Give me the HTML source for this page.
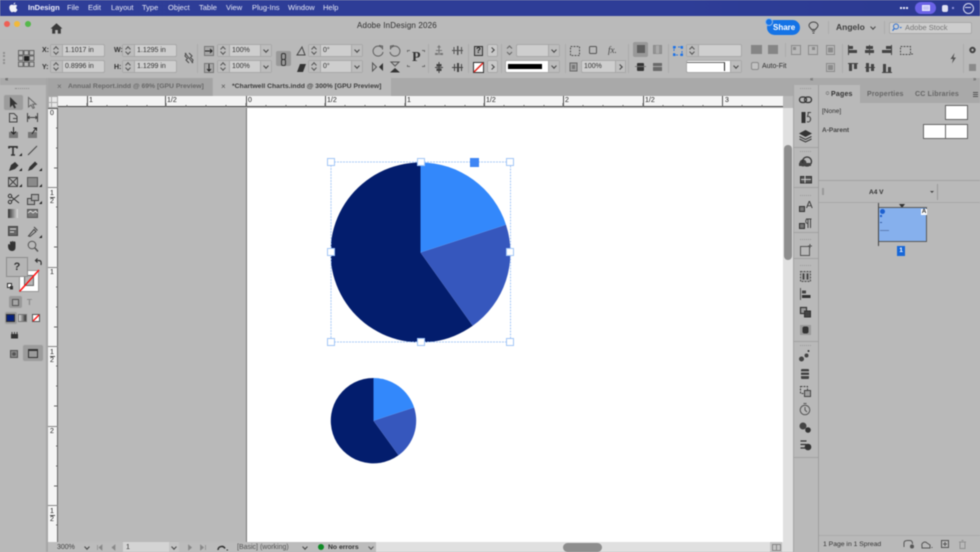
<!DOCTYPE html>
<html><head><meta charset="utf-8"><style>
html,body{margin:0;padding:0}
body{width:980px;height:552px;overflow:hidden;position:relative;background:#b9b9b9;font-family:"Liberation Sans",sans-serif;color:#333}
#w{position:absolute;left:0;top:0;width:980px;height:552px;overflow:hidden;filter:blur(.4px)}
#w div,svg.a{position:absolute}
.t{position:absolute;white-space:nowrap;font-size:7px;line-height:9px;color:#303030}
.m{position:absolute;top:3px;font-size:7.5px;line-height:10px;color:#e8e9f5;white-space:nowrap}
.f{position:absolute;height:13px;box-sizing:border-box;background:#cecece;border:1px solid #a8a8a8;border-radius:2px;font-size:7px;line-height:11px;color:#333;white-space:nowrap}
.sp{position:absolute;left:0;top:0;bottom:0;width:11px;background:#bdbdbd;border-right:1px solid #a8a8a8}
.sp:before,.sp:after{content:"";position:absolute;left:3px;width:3px;height:3px;border:solid #555;border-width:1px 0 0 1px;transform:rotate(45deg)}
.sp:before{top:2px}
.sp:after{top:5px;transform:rotate(225deg)}
.tx{padding-left:14px}
.dd{position:absolute;right:0;top:0;bottom:0;width:10px;background:#bdbdbd;border-left:1px solid #a8a8a8}
.dd:after{content:"";position:absolute;left:3px;top:3px;width:3px;height:3px;border:solid #444;border-width:0 1px 1px 0;transform:rotate(45deg)}
.sep{position:absolute;width:1px;background:#acacac}
.tk{position:absolute;background:#555}
.rt{position:absolute;font-size:7px;line-height:8px;color:#222}
.h{position:absolute;width:8px;height:8px;box-sizing:border-box;background:#fff;border:1px solid #a3c6f6}
.ar{position:absolute;width:3px;height:3px;border:solid #444;border-width:1px 1px 0 0;transform:rotate(45deg)}
.ch{position:absolute;width:3px;height:3px;border:solid #444;border-width:0 1px 1px 0;transform:rotate(45deg)}
</style></head><body><div id="w">

<!-- menu bar -->
<div style="left:0;top:0;width:980px;height:16px;background:linear-gradient(90deg,#2f3e98,#2e3d97 70%,#2c3a90)"></div>
<svg class="a" style="left:9px;top:2px" width="9" height="11" viewBox="0 0 9 11"><path d="M6.200 0.500C5.200 0.700 4.500 1.500 4.600 2.600 5.600 2.600 6.300 1.600 6.200 0.500ZM4.500 3.100C3.900 3.100 3.300 2.600 2.600 2.700 1.300 2.800 0.300 3.900 0.300 5.600 0.300 7.600 1.700 10.200 3 10.200 3.600 10.200 3.900 9.800 4.600 9.800 5.300 9.800 5.600 10.200 6.200 10.200 7.200 10.200 8.100 8.600 8.500 7.600 6.900 6.900 6.800 4.600 8.300 3.800 7.700 3 6.900 2.700 6.200 2.700 5.500 2.700 5 3.100 4.500 3.100Z" fill="#f2f2f8"/></svg>
<span class="m" style="left:28px;font-weight:bold;color:#f0f0fa">InDesign</span>
<span class="m" style="left:67px">File</span>
<span class="m" style="left:88px">Edit</span>
<span class="m" style="left:111px">Layout</span>
<span class="m" style="left:142px">Type</span>
<span class="m" style="left:168px">Object</span>
<span class="m" style="left:199px">Table</span>
<span class="m" style="left:226px">View</span>
<span class="m" style="left:252px">Plug-Ins</span>
<span class="m" style="left:288px">Window</span>
<span class="m" style="left:323px">Help</span>
<div style="left:900px;top:7px;width:2px;height:2px;background:#e8e8f8;box-shadow:3px 0 #e8e8f8,6px 0 #e8e8f8"></div>
<div style="left:915px;top:2px;width:21px;height:12px;border-radius:6px;background:#6a62e6"></div>
<div style="left:922px;top:5px;width:8px;height:6px;border:1px solid #eef;box-sizing:border-box;background:#c7c6f5"></div>
<div style="left:942px;top:5px;width:6px;height:7px;background:#dfe0f2;border-radius:2px"></div>
<div style="left:952px;top:7px;width:2px;height:2px;background:#8f92d8"></div>
<div style="left:963px;top:3px;width:9px;height:9px;border:1px solid #d8daf0;border-radius:50%"></div>
<div style="left:965px;top:7px;width:6px;height:1px;background:#d8daf0"></div>

<!-- title bar -->
<div style="left:0;top:16px;width:980px;height:23px;background:#bababa;border-bottom:1px solid #aaa"></div>
<div style="left:4px;top:21px;width:6px;height:6px;border-radius:50%;background:#ee5f55"></div>
<div style="left:14px;top:21px;width:6px;height:6px;border-radius:50%;background:#f2b93a"></div>
<div style="left:25px;top:21px;width:6px;height:6px;border-radius:50%;background:#54b84a"></div>
<svg class="a" style="left:50px;top:23px" width="13" height="11" viewBox="0 0 13 11"><path d="M6.500 0.300L0.600 5.600H2.200V10.600H5.200V7H7.800V10.600H10.800V5.600H12.400Z" fill="#3a3a3a"/></svg>
<div class="t" style="left:357px;top:21px;font-size:8px;letter-spacing:.15px;line-height:10px">Adobe InDesign 2026</div>

<div style="left:767px;top:20px;width:33px;height:15px;border-radius:8px;background:#1473e6"></div>
<div style="left:765px;top:18px;width:6px;height:6px;border-radius:50%;background:#1473e6;border:0.5px solid #8fb5e6"></div>
<div class="t" style="left:773px;top:23px;font-size:8px;color:#fff;font-weight:bold;line-height:10px">Share</div>
<svg class="a" style="left:808px;top:21px" width="11" height="13" viewBox="0 0 11 13"><path d="M3.500 8.500C3 7 1 6.500 1 4.500 1 2.500 3 1 5.500 1S10 2.500 10 4.500C10 6.500 8 7 7.500 8.500Z" fill="none" stroke="#444" stroke-width="1"/><path d="M4 10H7M4.500 12H6.500" stroke="#444" stroke-width="1"/></svg>
<div class="sep" style="left:828px;top:21px;height:13px"></div>
<div class="t" style="left:836px;top:22px;font-size:8.500px;line-height:11px;font-weight:bold;color:#404040">Angelo</div>
<div class="ch" style="left:871px;top:25px"></div>
<div class="sep" style="left:884px;top:21px;height:13px"></div>
<div style="left:889px;top:22px;width:83px;height:12px;box-sizing:border-box;background:#cdcdcd;border:1px solid #aaa;border-radius:2px"></div>
<svg class="a" style="left:892px;top:23px" width="10" height="9" viewBox="0 0 10 9"><circle cx="4" cy="3.500" r="2.500" fill="none" stroke="#2f6fd0" stroke-width="1"/><path d="M2.300 5.500L0.500 7.800" stroke="#2f6fd0" stroke-width="1.200"/><path d="M7.500 4H10L8.700 5.500Z" fill="#2f6fd0"/></svg>
<div class="t" style="left:905px;top:23px;color:#777;font-size:7.500px">Adobe Stock</div>

<!-- control panel -->
<div style="left:0;top:39px;width:980px;height:39px;background:#b9b9b9"></div>
<div style="left:3px;top:52px;width:1px;height:12px;border-left:2px dotted #909090"></div>

<div class="t" style="left:42px;top:46px;font-weight:bold">X:</div>
<div class="t" style="left:42px;top:63px;font-weight:bold">Y:</div>
<div class="f tx" style="left:50px;top:44px;width:55px"><span class="sp"></span>1.1017 in</div>
<div class="f tx" style="left:50px;top:60px;width:55px"><span class="sp"></span>0.8996 in</div>
<div class="t" style="left:114px;top:46px;font-weight:bold">W:</div>
<div class="t" style="left:114px;top:63px;font-weight:bold">H:</div>
<div class="f tx" style="left:122px;top:44px;width:55px"><span class="sp"></span>1.1295 in</div>
<div class="f tx" style="left:122px;top:60px;width:55px"><span class="sp"></span>1.1299 in</div>
<div class="sep" style="left:197px;top:44px;height:29px"></div>
<div class="f tx" style="left:217px;top:44px;width:55px"><span class="sp"></span>100%<span class="dd"></span></div>
<div class="f tx" style="left:217px;top:60px;width:55px"><span class="sp"></span>100%<span class="dd"></span></div>
<div style="left:276px;top:51px;width:15px;height:15px;background:#999;border-radius:2px"></div>
<div style="left:281px;top:53px;width:3px;height:5px;border:1px solid #333;border-radius:2px"></div>
<div style="left:281px;top:59px;width:3px;height:5px;border:1px solid #333;border-radius:2px"></div>
<div class="f tx" style="left:308px;top:44px;width:55px"><span class="sp"></span>0°<span class="dd"></span></div>
<div class="f tx" style="left:308px;top:60px;width:55px"><span class="sp"></span>0°<span class="dd"></span></div>
<div class="t" style="left:412px;top:50px;font:bold 14px/16px 'Liberation Serif',serif;color:#333">P</div>
<div class="sep" style="left:428px;top:44px;height:29px"></div>
<div class="sep" style="left:468px;top:44px;height:29px"></div>
<div style="left:474px;top:46px;width:9px;height:10px;box-sizing:border-box;border:1px solid #333;background:#aaa;font:bold 8px/8px 'Liberation Sans';text-align:center;color:#222">?</div>
<div style="left:487px;top:44px;width:11px;height:13px;box-sizing:border-box;background:#c9c9c9;border:1px solid #a8a8a8;border-radius:2px"></div>
<div class="ar" style="left:490px;top:48px"></div>
<div style="left:487px;top:60px;width:11px;height:13px;box-sizing:border-box;background:#c9c9c9;border:1px solid #a8a8a8;border-radius:2px"></div>
<div class="ar" style="left:490px;top:65px"></div>
<div class="sep" style="left:501px;top:44px;height:29px"></div>
<div class="f" style="left:516px;top:44px;width:44px"><span class="dd"></span></div>
<div class="f" style="left:505px;top:60px;width:55px;background:#fff"><span class="dd"></span></div>
<div style="left:508px;top:64px;width:34px;height:5px;background:#000"></div>
<div class="sep" style="left:565px;top:44px;height:29px"></div>
<div class="t" style="left:608px;top:45px;font:italic 9px/11px 'Liberation Serif',serif;color:#444">fx.</div>
<div class="f" style="left:581px;top:60px;width:45px;padding-left:2px">100%</div>
<div style="left:615px;top:60px;width:11px;height:13px;box-sizing:border-box;background:#c0c0c0;border:1px solid #a8a8a8"></div>
<div class="ar" style="left:618px;top:65px"></div>
<div class="sep" style="left:628px;top:44px;height:29px"></div>
<div style="left:633px;top:42px;width:15px;height:15px;background:#999;border-radius:2px"></div>
<div class="sep" style="left:668px;top:44px;height:29px"></div>
<div class="f" style="left:686px;top:44px;width:56px;background:#cfcfcf"><span class="sp"></span></div>
<div class="f" style="left:686px;top:60px;width:56px;background:#fff"><span class="dd"></span></div>
<div style="left:687px;top:62px;width:38px;height:9px;border-top:1px solid #666;border-right:1px solid #222;box-sizing:border-box"></div>
<div style="left:751px;top:62px;width:8px;height:8px;box-sizing:border-box;border:1px solid #8a8a8a;border-radius:2px;background:#c2c2c2"></div>
<div class="t" style="left:762px;top:62px">Auto-Fit</div>
<div class="sep" style="left:785px;top:43px;height:14px"></div>
<div class="sep" style="left:842px;top:44px;height:29px"></div>
<div class="sep" style="left:963px;top:44px;height:29px"></div>

<!-- left strip / collapse row -->
<div style="left:0;top:78px;width:46px;height:7px;background:#a9a9a9"></div>
<div class="t" style="left:5px;top:76px;font-size:6px;font-weight:bold;color:#555">«</div>
<div style="left:46px;top:78px;width:2px;height:474px;background:#a6a6a6"></div>
<div style="left:794px;top:78px;width:186px;height:7px;background:#a9a9a9"></div>
<div class="t" style="left:810px;top:76px;font-size:6px;font-weight:bold;color:#666">«</div>
<div class="t" style="left:973px;top:76px;font-size:6px;font-weight:bold;color:#666">»</div>

<!-- tabs -->
<div style="left:48px;top:78px;width:746px;height:18px;background:#a9a9a9"></div>
<div style="left:48px;top:78px;width:164px;height:18px;background:#a3a3a3"></div>
<div class="t" style="left:57px;top:82px;font-size:8px;line-height:10px;color:#666">×</div>
<div class="t" style="left:68px;top:82px;color:#686868;font-weight:bold;font-size:6.800px;line-height:9px">Annual Report.indd @ 69% [GPU Preview]</div>
<div style="left:213px;top:78px;width:178px;height:18px;background:#b9b9b9"></div>
<div class="t" style="left:221px;top:82px;font-size:8px;line-height:10px;color:#555">×</div>
<div class="t" style="left:232px;top:82px;color:#3d3d3d;font-weight:bold;font-size:6.800px;line-height:9px">*Chartwell Charts.indd @ 300% [GPU Preview]</div>

<!-- rulers -->
<div style="left:48px;top:96px;width:735px;height:11px;background:#f4f4f4;border-bottom:1px solid #444;box-sizing:border-box"></div>
<div style="left:48px;top:96px;width:10px;height:12px;background:#e8e8e8;border:1px solid #aaa;box-sizing:border-box"></div>
<div style="left:51px;top:96px;width:1px;height:12px;background:#aaa"></div>
<div style="left:48px;top:102px;width:10px;height:1px;background:#aaa"></div>
<div class="tk" style="left:87px;top:96px;width:1px;height:11px"></div><div class="rt" style="left:89px;top:97px">1</div>
<div class="tk" style="left:165px;top:96px;width:1px;height:11px"></div><div class="rt" style="left:167px;top:97px">1/2</div>
<div class="tk" style="left:246px;top:96px;width:1px;height:11px"></div><div class="rt" style="left:248px;top:97px">0</div>
<div class="tk" style="left:325px;top:96px;width:1px;height:11px"></div><div class="rt" style="left:327px;top:97px">1/2</div>
<div class="tk" style="left:405px;top:96px;width:1px;height:11px"></div><div class="rt" style="left:407px;top:97px">1</div>
<div class="tk" style="left:484px;top:96px;width:1px;height:11px"></div><div class="rt" style="left:486px;top:97px">1/2</div>
<div class="tk" style="left:563px;top:96px;width:1px;height:11px"></div><div class="rt" style="left:565px;top:97px">2</div>
<div class="tk" style="left:643px;top:96px;width:1px;height:11px"></div><div class="rt" style="left:645px;top:97px">1/2</div>
<div class="tk" style="left:722px;top:96px;width:1px;height:11px"></div><div class="rt" style="left:725px;top:97px">3</div>
<svg class="a" style="left:58px;top:103px" width="725" height="4"><path d="M9 2V4M49 2V4M69 2V4M89 2V4M128 2V4M148 2V4M168 2V4M208 2V4M228 2V4M248 2V4M287 2V4M307 2V4M327 2V4M367 2V4M387 2V4M407 2V4M446 2V4M466 2V4M486 2V4M525 2V4M545 2V4M565 2V4M605 2V4M625 2V4M645 2V4M684 2V4M704 2V4M29 0V4M108 0V4M188 0V4M267 0V4M347 0V4M426 0V4M505 0V4M585 0V4" stroke="#666" stroke-width="1" fill="none"/></svg>

<div style="left:48px;top:108px;width:10px;height:434px;background:#f4f4f4"></div>
<div style="left:57px;top:108px;width:1px;height:434px;background:#666"></div>
<div class="tk" style="left:48px;top:108px;width:10px;height:1px"></div><div class="rt" style="left:50px;top:110px">0</div>
<div class="tk" style="left:48px;top:187px;width:10px;height:1px;background:#888"></div><div class="rt" style="left:50px;top:190px">1</div><div class="tk" style="left:50px;top:197px;width:5px;height:1px"></div><div class="rt" style="left:50px;top:198px">2</div>
<div class="tk" style="left:48px;top:267px;width:10px;height:1px;background:#888"></div><div class="rt" style="left:50px;top:269px">1</div>
<div class="tk" style="left:48px;top:346px;width:10px;height:1px;background:#888"></div><div class="rt" style="left:50px;top:349px">1</div><div class="tk" style="left:50px;top:356px;width:5px;height:1px"></div><div class="rt" style="left:50px;top:357px">2</div>
<div class="tk" style="left:48px;top:426px;width:10px;height:1px;background:#888"></div><div class="rt" style="left:50px;top:428px">2</div>
<div class="tk" style="left:48px;top:505px;width:10px;height:1px;background:#888"></div><div class="rt" style="left:50px;top:508px">1</div><div class="tk" style="left:50px;top:515px;width:5px;height:1px"></div><div class="rt" style="left:50px;top:516px">2</div>
<svg class="a" style="left:53px;top:108px" width="5" height="434"><path d="M3 20H5M3 40H5M1 60H5M3 99H5M3 119H5M1 139H5M3 179H5M3 199H5M1 219H5M3 258H5M3 278H5M1 298H5M3 338H5M3 358H5M1 378H5M3 417H5" stroke="#666" fill="none"/></svg>

<!-- page -->
<div style="left:246px;top:108px;width:537px;height:434px;background:#fff;border-left:1px solid #777;box-sizing:border-box"></div>

<!-- pies -->
<svg class="a" style="left:0;top:0" width="980" height="552">
<path d="M420.500 252.500V162.500A90 90 0 1 0 472.700 325.800Z" fill="#031d6d"/>
<path d="M420.500 252.500L472.700 325.800A90 90 0 0 0 506 224.700Z" fill="#3657bd"/>
<path d="M420.500 252.500V162.500A90 90 0 0 1 506 224.700Z" fill="#3388fb"/>
<path d="M373.500 420.700V378A42.700 42.700 0 1 0 398.500 455.300Z" fill="#031d6d"/>
<path d="M373.500 420.700L398.500 455.300A42.700 42.700 0 0 0 414.100 407.500Z" fill="#3657bd"/>
<path d="M373.500 420.700V378A42.700 42.700 0 0 1 414.100 407.500Z" fill="#3388fb"/>
<rect x="331" y="162" width="179.500" height="180" fill="none" stroke="#a9caf8" stroke-width="1" stroke-dasharray="2 1"/>
</svg>
<div class="h" style="left:327px;top:158px"></div>
<div class="h" style="left:417px;top:158px"></div>
<div class="h" style="left:506px;top:158px"></div>
<div class="h" style="left:327px;top:248px"></div>
<div class="h" style="left:506px;top:248px"></div>
<div class="h" style="left:327px;top:338px"></div>
<div class="h" style="left:417px;top:338px"></div>
<div class="h" style="left:506px;top:338px"></div>
<div style="left:470px;top:158px;width:9px;height:9px;background:#3f86f4"></div>

<!-- v scrollbar -->
<div style="left:783px;top:108px;width:11px;height:444px;background:#e0e0e0"></div>
<div style="left:784px;top:145px;width:8px;height:115px;border-radius:4px;background:#8e8e8e"></div>

<!-- status bar -->
<div style="left:48px;top:542px;width:746px;height:10px;background:#e0e0e0"></div>
<div style="left:48px;top:542px;width:328px;height:10px;background:#bcbcbc"></div>
<div class="t" style="left:57px;top:543px;color:#444;line-height:10px">300%</div>
<div class="ch" style="left:85px;top:545px"></div>
<div style="left:123px;top:542px;width:46px;height:10px;background:#d4d4d4;font-size:7px;line-height:11px;padding-left:3px;box-sizing:border-box;color:#333">1</div>
<div style="left:169px;top:542px;width:10px;height:10px;background:#c4c4c4"></div>
<div class="ch" style="left:172px;top:545px"></div>
<div class="t" style="left:237px;top:543px;color:#555;font-size:7px;line-height:10px">[Basic] (working)</div>
<div class="ch" style="left:303px;top:545px"></div>
<div style="left:318px;top:544px;width:6px;height:6px;border-radius:50%;background:#0f8a25"></div>
<div class="t" style="left:328px;top:543px;color:#333;font-weight:bold;font-size:6.800px;line-height:10px">No errors</div>
<div class="ch" style="left:369px;top:545px;border-color:#555"></div>
<div style="left:563px;top:543px;width:39px;height:9px;border-radius:5px;background:#8e8e8e"></div>
<div style="left:770px;top:542px;width:12px;height:10px;background:#c4c4c4"></div>
<div style="left:772px;top:544px;width:9px;height:7px;border:1px solid #888;box-sizing:border-box"></div>
<div style="left:776px;top:544px;width:1px;height:7px;background:#888"></div>

<!-- toolbar buttons & swatches -->
<div style="left:15px;top:88px;width:14px;border-top:1px dotted #8a8a8a"></div>
<div style="left:4px;top:95px;width:19px;height:15px;background:#9c9c9c;border-radius:2px"></div>
<div style="left:19px;top:270px;width:20px;height:22px;background:#fff;border:1px solid #999;box-sizing:border-box"></div>
<div style="left:24px;top:275px;width:10px;height:11px;background:#b5b5b5;border:1px solid #666;box-sizing:border-box"></div>
<div style="left:6px;top:257px;width:22px;height:20px;box-sizing:border-box;background:#b5b5b5;border:1px solid #8d8d8d;font:bold 11px/19px 'Liberation Sans';text-align:center;color:#333">?</div>
<div style="left:9px;top:296px;width:13px;height:12px;background:#999;border-radius:2px"></div>
<div style="left:12px;top:299px;width:7px;height:7px;box-sizing:border-box;border:1px solid #555;background:#a8a8a8"></div>
<div class="t" style="left:27px;top:297px;font:bold 8px/11px 'Liberation Sans';color:#8a8a8a">T</div>
<div style="left:5px;top:312px;width:12px;height:12px;background:#9c9c9c;border-radius:2px"></div>
<div style="left:6px;top:314px;width:9px;height:8px;background:#06207a;border:1px solid #333;box-sizing:border-box"></div>
<div style="left:18px;top:314px;width:9px;height:8px;background:linear-gradient(90deg,#ddd,#333);border:1px solid #777;box-sizing:border-box"></div>
<div style="left:23px;top:345px;width:20px;height:16px;background:#9c9c9c;border-radius:2px"></div>
<div style="left:28px;top:349px;width:10px;height:9px;border:1px solid #333;border-top:2px solid #333;box-sizing:border-box"></div>

<!-- right dock -->
<div style="left:793px;top:85px;width:1px;height:467px;background:#a5a5a5"></div>
<div style="left:794px;top:85px;width:25px;height:467px;background:#b9b9b9;border-right:1px solid #9d9d9d;box-sizing:border-box"></div>

<!-- right panel -->
<div style="left:819px;top:85px;width:161px;height:467px;background:#b9b9b9"></div>
<div style="left:819px;top:85px;width:161px;height:18px;background:#a9a9a9"></div>
<div style="left:819px;top:85px;width:41px;height:18px;background:#b9b9b9"></div>
<div class="t" style="left:825px;top:90px;font-size:6px;color:#666">≎</div>
<div class="t" style="left:831px;top:90px;font-weight:bold;font-size:7px;letter-spacing:.2px;color:#333">Pages</div>
<div class="t" style="left:867px;top:90px;font-weight:bold;font-size:7px;letter-spacing:.2px;color:#666">Properties</div>
<div class="t" style="left:915px;top:90px;font-weight:bold;font-size:7px;letter-spacing:.2px;color:#666">CC Libraries</div>
<div style="left:973px;top:92px;width:5px;height:1px;background:#555;box-shadow:0 2px #555,0 4px #555"></div>
<div class="t" style="left:822px;top:107px;font-size:6.500px">[None]</div>
<div class="t" style="left:822px;top:126px;font-size:6.500px;font-weight:bold;color:#444">A-Parent</div>
<div style="left:945px;top:105px;width:23px;height:15px;background:#fff;border:1px solid #666;box-sizing:border-box"></div>
<div style="left:923px;top:124px;width:45px;height:15px;background:#fff;border:1px solid #666;box-sizing:border-box"></div>
<div style="left:945px;top:124px;width:1px;height:15px;background:#666"></div>
<div style="left:819px;top:180px;width:161px;height:1px;background:#a3a3a3"></div>
<div style="left:822px;top:188px;width:2px;height:7px;background:#999"></div>
<div class="t" style="left:869px;top:188px;font-weight:bold;font-size:6.500px">A4 V</div>
<div style="left:930px;top:191px;width:0;height:0;border:2px solid transparent;border-top:2px solid #444"></div>
<div style="left:937px;top:184px;width:1px;height:16px;background:#9a9a9a"></div>
<div style="left:819px;top:202px;width:161px;height:1px;background:#a8a8a8"></div>
<div style="left:899px;top:204px;width:0;height:0;border:3px solid transparent;border-top:4px solid #333"></div>
<div style="left:878px;top:203px;width:1px;height:43px;background:#444"></div>
<div style="left:879px;top:207px;width:48px;height:35px;background:#86b0ed;border:solid #5a5a5a;border-width:1px 1px 1px 0;box-sizing:border-box"></div>
<div style="left:880px;top:209px;width:5px;height:5px;border-radius:50%;background:#1c5fcf"></div>
<div style="left:880px;top:215px;width:2px;height:2px;background:#1c5fcf"></div>
<div style="left:880px;top:222px;width:2px;height:1px;background:#3a63a8"></div>
<div style="left:880px;top:230px;width:9px;height:1px;background:#5f7fb5"></div>
<div style="left:921px;top:209px;width:6px;height:6px;background:#fff;font:bold 6px/6px 'Liberation Sans';color:#222;text-align:center">A</div>
<div style="left:897px;top:246px;width:8px;height:10px;background:#1767d8;color:#fff;font:bold 6.500px/10px 'Liberation Sans';text-align:center">1</div>
<div style="left:819px;top:535px;width:161px;height:1px;background:#ababab"></div>
<div class="t" style="left:823px;top:540px;font-size:6.800px;line-height:9px;color:#333">1 Page in 1 Spread</div>

<!-- all icons, absolute page coordinates -->
<svg class="a" style="left:0;top:0" width="980" height="552" viewBox="0 0 980 552">
<defs><linearGradient id="g2" x1="0" x2="1"><stop offset="0" stop-color="#333"/><stop offset="1" stop-color="#ddd"/></linearGradient></defs>

<!-- CONTROL PANEL -->
<g fill="none" stroke="#555" stroke-width=".8"><rect x="18.500" y="50.500" width="4.500" height="4.500"/><rect x="24" y="50.500" width="4.500" height="4.500"/><rect x="29.500" y="50.500" width="4.500" height="4.500"/><rect x="18.500" y="56" width="4.500" height="4.500"/><rect x="29.500" y="56" width="4.500" height="4.500"/><rect x="18.500" y="62" width="4.500" height="4.500"/><rect x="24" y="62" width="4.500" height="4.500"/><rect x="29.500" y="62" width="4.500" height="4.500"/></g><rect x="24" y="56" width="5" height="5" fill="#222"/>
<path d="M185 53L193 63M186 53L185 56 187 58M192 63L193 60 191 58M189 53L192 56 190 58M189 63L186 60 188 58" fill="none" stroke="#4a4a4a" stroke-width="1"/>
<rect x="204.500" y="46.500" width="9" height="9" fill="#a8a8a8" stroke="#777"/><path d="M205 51H212M210 49L212 51 210 53" stroke="#222" fill="none"/>
<rect x="204.500" y="63.500" width="9" height="9" fill="#a8a8a8" stroke="#777"/><path d="M209 64V71M207 69L209 71 211 69" stroke="#222" fill="none"/>
<path d="M297 55H305L302 47Z" fill="none" stroke="#444"/>
<path d="M297 72H303L306 64H300Z" fill="#333"/>
<path d="M382 48A5 5 0 1 0 383 52M379 45.500L382.500 46V49.500" fill="none" stroke="#5f5f5f" stroke-width="1"/>
<path d="M391 48A5 5 0 1 1 390 52M394 45.500L390.500 46V49.500" fill="none" stroke="#5f5f5f" stroke-width="1"/>
<path d="M372.500 63V71L376.500 67Z" fill="none" stroke="#555"/><path d="M383 63V71L379 67Z" fill="#333"/>
<path d="M391 62H399L395 66Z" fill="none" stroke="#555"/><path d="M390 72.500H400L395 68Z" fill="#333"/>
<path d="M407.500 52V50.500H410M422 50.500H424.500V52M407.500 65V66.500H410M422 66.500H424.500V65" fill="none" stroke="#555" stroke-width=".8"/>
<g fill="#777"><path d="M439 45L441 47.500H437ZM438.500 47H439.500V55H438.500ZM436 50H442V51H436ZM435 53H438V55H435ZM440 53H443V55H440Z"/></g>
<g fill="#555"><path d="M452 50H463V51H452ZM453.500 47H454.500V54H453.500ZM457 46H458.500V55H457ZM461 47H462V54H461Z"/></g>
<g fill="#444"><path d="M435 67H443V68H435ZM438.500 62H439.500V73H438.500ZM436.500 64H441.500V66.500H436.500ZM436.500 68.500H441.500V71H436.500Z"/><path d="M452 67H463V68H452ZM454 64H455V71H454ZM457 63H459V72H457ZM461 64H462V71H461Z"/></g>
<rect x="473.500" y="62.500" width="10" height="10" fill="#fff" stroke="#333"/><path d="M474 72L483 63" stroke="#e4231c" stroke-width="1.500"/>
<path d="M507 48.500L509.500 46 512 48.500M507 52L509.500 54.500 512 52" fill="none" stroke="#666"/>
<rect x="570.500" y="46.500" width="9" height="9" fill="none" stroke="#555" stroke-dasharray="2 1"/>
<rect x="589.500" y="46.500" width="7" height="7" rx="1" fill="none" stroke="#555"/>
<rect x="570" y="63" width="7" height="8" fill="#a3a3a3" stroke="#666"/><rect x="572" y="65" width="3" height="4" fill="#777"/>
<rect x="637" y="45" width="8" height="8" fill="#5f5f5f"/>
<rect x="653.500" y="45.500" width="8" height="8" fill="#949494" stroke="#8a8a8a"/><rect x="656" y="45.500" width="3" height="8" fill="#aaa"/>
<rect x="637" y="63" width="7" height="8" rx="1" fill="#333"/><rect x="635" y="66" width="11" height="1" fill="#777"/>
<rect x="653" y="63" width="9" height="8" fill="#6a6a6a"/><rect x="653" y="66" width="9" height="1" fill="#aaa"/>
<rect x="674" y="47" width="8" height="8" fill="none" stroke="#2f78e0" stroke-dasharray="2 2"/><g fill="#1e73e6"><rect x="673" y="46" width="2.500" height="2.500"/><rect x="680.500" y="46" width="2.500" height="2.500"/><rect x="673" y="53.500" width="2.500" height="2.500"/><rect x="680.500" y="53.500" width="2.500" height="2.500"/></g>
<g fill="#858585"><rect x="751" y="45" width="11" height="9"/><rect x="768" y="45" width="10" height="9"/></g>
<g fill="none" stroke="#8b8b8b"><rect x="791.500" y="45.500" width="9" height="9"/><rect x="808.500" y="45.500" width="9" height="9"/><rect x="826.500" y="45.500" width="8" height="9"/><rect x="826.500" y="63.500" width="8" height="8"/></g>
<g fill="#8b8b8b"><rect x="793" y="47" width="3" height="3"/><rect x="812" y="47" width="3" height="3"/><rect x="828" y="47.500" width="5" height="5"/><rect x="828" y="65" width="5" height="5"/></g>
<g fill="#444"><path d="M848 45H849V55H848ZM849 46H853V49H849ZM849 50H857V53H849Z"/><path d="M869 45H870V55H869ZM866 46H873V49H866ZM865 50H874V53H865Z"/><path d="M891 45H892V55H891ZM886 46H891V49H886ZM882 50H891V53H882Z"/><path d="M848 63H858V64H848ZM849 64H852V71H849ZM854 64H857V69H854Z"/><path d="M865 67H875V68H865ZM866 63H869V72H866ZM871 64H874V71H871Z"/><path d="M882 72H892V73H882ZM883 64H886V72H883ZM888 67H891V72H888Z"/></g>
<rect x="900.500" y="46.500" width="10" height="8" fill="none" stroke="#555" stroke-dasharray="2 1"/><path d="M911 54H913" stroke="#555"/>
<path d="M954.500 53L950.500 59H953L952 63.500 956 57.500H953.500Z" fill="#555"/>
<circle cx="972.500" cy="50" r="2.200" fill="none" stroke="#444" stroke-width="2"/>
<rect x="969" y="64" width="7" height="7" fill="#8a8a8a"/>

<!-- TOOLBAR -->
<path d="M10 97V107.500L12.500 105 14.300 108.500 16 107.700 14.300 104.300H17.500Z" fill="#333"/>
<path d="M28.500 97.500V107L31 105 33 108.300 34.300 107.700 32.700 104.300H36Z" fill="none" stroke="#666"/>
<path d="M9.500 113.500H14L17 116.500V122H9.500Z" fill="none" stroke="#444"/><path d="M13 118.500H17.500" stroke="#444"/>
<path d="M27.500 113V122M37.500 113V122M28 117.500H37M29.500 116L28 117.500 29.500 119M35.500 116L37 117.500 35.500 119" stroke="#444" fill="none"/>
<path d="M9 132H18V138H9Z" fill="#777"/><path d="M13.500 127V133.500M11 131.500L13.500 134 16 131.500" stroke="#222" fill="none"/>
<path d="M28 132H37V138H28Z" fill="#777"/><path d="M32 134L36 128M33.500 128H36.500V131" stroke="#222" fill="none"/>
<path d="M9 148.500V146.800H17V148.500M13 147V155M11 155H15" stroke="#333" stroke-width="1.600" fill="none"/>
<path d="M28 155L37 146" stroke="#444" fill="none"/>
<path d="M19 156L22 153V156Z" fill="#222"/>
<path d="M9 171L11 165 15 162 18.500 165.500 15 169Z" fill="#333"/><path d="M19 171L22 168V171Z" fill="#222"/>
<path d="M28 171L29.500 167 35 161.500 37.500 164 32 169.500Z" fill="#333"/><path d="M39 171L42 168V171Z" fill="#222"/>
<rect x="8.500" y="177.500" width="9" height="9" fill="#b0b0b0" stroke="#444"/><path d="M8.500 177.500L17.500 186.500M17.500 177.500L8.500 186.500" stroke="#444"/>
<rect x="27.500" y="177.500" width="10" height="9" fill="#8a8a8a" stroke="#555"/>
<path d="M19 187L22 184V187ZM39 187L42 184V187Z" fill="#222"/>
<circle cx="10" cy="202" r="1.700" fill="none" stroke="#333"/><circle cx="10" cy="196" r="1.700" fill="none" stroke="#333"/><path d="M11.500 197L19 203M11.500 201L19 195" stroke="#333"/>
<rect x="27.500" y="198.500" width="7" height="6" fill="#aaa" stroke="#444"/><rect x="31.500" y="194.500" width="7" height="6" fill="#aaa" stroke="#444"/><path d="M39 204L42 201V204Z" fill="#222"/>
<rect x="8" y="209" width="10" height="9" fill="url(#g2)"/>
<rect x="27.500" y="209.500" width="10" height="8" fill="#777" stroke="#555"/><path d="M28 213L30.500 211 33 213 35.500 211 37.500 213" stroke="#ddd" fill="none"/>
<rect x="8.500" y="226.500" width="9" height="9" fill="#666" stroke="#444"/><path d="M10 229H16M10 232H14" stroke="#ddd"/>
<path d="M28.500 236L34 229.500 36 231.500 30 236.500ZM34 227L37.500 230.500" stroke="#444" fill="#bbb"/><path d="M39 238L42 235V238Z" fill="#222"/>
<path d="M8 246C8 243 10 244 10 245.500V242.500C10 241 11.700 241 11.700 242.500 11.700 240.500 13.500 240.500 13.500 242.500 13.500 241 15.500 241 15.500 243V247C15.500 250 14 251 12 251 10 251 8 249.500 8 246Z" fill="#333"/>
<circle cx="32" cy="245" r="3.800" fill="none" stroke="#555"/><path d="M34.700 247.800L38 251.500" stroke="#555" stroke-width="1.500"/>
<path d="M19.500 291.500L39 270" stroke="#f11" stroke-width="1.500"/>
<path d="M35.500 260.500H39C41 260.500 41.500 262 41 265M37.500 258.500L35.500 260.500 37.500 262.500" fill="none" stroke="#333" stroke-width="1.200"/>
<rect x="7.500" y="283.500" width="4" height="4" fill="#fff" stroke="#333"/><rect x="10" y="286" width="3" height="3.500" fill="#333"/>
<rect x="32.500" y="314.500" width="7" height="7" fill="#fff" stroke="#555"/><path d="M33 321L39 315" stroke="#f11" stroke-width="1.300"/>
<rect x="11" y="334" width="7" height="4.500" fill="#333"/><path d="M12 332V334M14.500 332V334M17 332V334" stroke="#444"/>
<rect x="10.500" y="350.500" width="7" height="7" fill="#888" stroke="#555"/><circle cx="14" cy="354" r="1.800" fill="#555"/>

<!-- DOCK -->
<g stroke="#999" stroke-dasharray="1 1" fill="none"><path d="M800 88.500H812M800 151.500H812M800 195.500H812M800 239.500H812M800 265.500H812M800 345.500H812"/></g>
<path d="M794 147.500H818M794 187.500H818M794 232.500H818M794 258.500H818M794 341.500H818M794 457.500H818" stroke="#a2a2a2" fill="none"/>
<rect x="799.500" y="97" width="7" height="5.500" rx="2.700" fill="none" stroke="#333" stroke-width="1.300"/><rect x="804.500" y="97" width="7" height="5.500" rx="2.700" fill="none" stroke="#333" stroke-width="1.300"/>
<rect x="801.500" y="112" width="4" height="11" fill="#333"/><path d="M807.500 112.500H811M808.500 112.500L807.500 116.500C810 116 811.500 118.500 810 121 809 122.500 807.500 122 807 121.500" fill="none" stroke="#444"/>
<path d="M805.500 130L812 133.500 805.500 137 799 133.500Z" fill="#333"/><path d="M799.500 136.500L805.500 139.500 811.500 136.500M799.500 139L805.500 142 811.500 139" stroke="#333" fill="none"/>
<circle cx="803" cy="163" r="3.500" fill="#444"/><circle cx="807" cy="161.500" r="4.500" fill="none" stroke="#333" stroke-width="1.300"/><rect x="799" y="163" width="12" height="3" fill="#444"/>
<rect x="800.500" y="176.500" width="11" height="6.500" fill="#555" stroke="#333"/><path d="M805 176V183M801 179.500H811" stroke="#ccc"/>
<rect x="799.500" y="206.500" width="5" height="5" fill="#777" stroke="#333"/><text x="806" y="208" font-size="10" font-family="Liberation Sans" fill="#333">A</text>
<rect x="799.500" y="223.500" width="5" height="5" fill="#777" stroke="#333"/><path d="M806 219H811.500M808 219V228M810.500 219V228M808 219A2.200 2.200 0 0 0 808 223.500" stroke="#444" fill="none"/>
<rect x="800.500" y="246.500" width="9" height="9" fill="none" stroke="#555"/><path d="M810 244V248M808 246H812" stroke="#555"/>
<rect x="800.500" y="271.500" width="10" height="10" fill="#a5a5a5" stroke="#555" stroke-dasharray="2 1"/><path d="M803.500 273.500V279.500M807.500 273.500V279.500" stroke="#333" stroke-width="1.500"/>
<path d="M800.500 288V300" stroke="#555"/><rect x="802" y="290.500" width="4" height="3" fill="#444"/><rect x="802" y="295" width="8.500" height="3" fill="#333"/>
<rect x="800.500" y="307.500" width="6" height="6" fill="#999" stroke="#333" stroke-width="1.200"/><rect x="804.500" y="311" width="6" height="6" fill="#444" stroke="#333"/>
<rect x="800" y="325" width="11" height="10" fill="#999"/><rect x="802.500" y="326.500" width="6" height="7" rx="2" fill="#333"/>
<circle cx="801.500" cy="359" r="2.500" fill="#444"/><circle cx="806.500" cy="355.500" r="2" fill="#444"/><circle cx="808.500" cy="351" r="1" fill="#333"/>
<rect x="801" y="369" width="8" height="10" rx="1" fill="#444"/><path d="M801 372H809M801 375.500H809" stroke="#ccc"/>
<rect x="800.500" y="386.500" width="7" height="7" fill="none" stroke="#444" stroke-dasharray="2 1"/><rect x="804.500" y="390.500" width="6" height="6" fill="#a0a0a0" stroke="#444"/>
<circle cx="805" cy="410" r="4.800" fill="none" stroke="#555"/><path d="M805 407V410L807 412M803.500 403.500H806.500" stroke="#555" fill="none"/>
<circle cx="803" cy="426" r="3.500" fill="#444"/><circle cx="808" cy="430" r="2.800" fill="#333"/>
<path d="M800.500 441H806.500M800.500 444.500H806.500M800.500 448H806" stroke="#333" stroke-width="1.300"/><circle cx="808" cy="447" r="3.300" fill="#333"/>

<!-- PANEL FOOT -->
<path d="M904 547V543C904 541 906 540.500 907.500 540.500H910C912 540.500 912.500 542 912.500 544" fill="none" stroke="#555"/><circle cx="912" cy="546.500" r="2" fill="#555"/>
<path d="M922 546A3 3 0 0 1 927 543L930 545V548H922Z" fill="none" stroke="#555"/><path d="M931.500 547.500H932.500" stroke="#555"/>
<rect x="941.500" y="540.500" width="7" height="7" fill="none" stroke="#555"/><path d="M943 544H947M945 542V546" stroke="#555"/>
<path d="M959 542H966M960 542V548.500H965V542M961.500 540.500H963.500" fill="none" stroke="#909090"/>

<!-- STATUS -->
<path d="M97.500 545V550M102 545L99 547.500 102 550ZM115 545L112 547.500 115 550Z" fill="#888" stroke="#888" stroke-width=".7"/>
<path d="M188.500 545L191.500 547.500 188.500 550ZM200.500 545L203.500 547.500 200.500 550ZM205.500 545V550" fill="#888" stroke="#888" stroke-width=".7"/>
<path d="M218 550A3.700 3.700 0 0 1 225 548.500" fill="none" stroke="#333" stroke-width="1.500"/><path d="M226.500 550H228" stroke="#333"/>
</svg>
</div></body></html>
